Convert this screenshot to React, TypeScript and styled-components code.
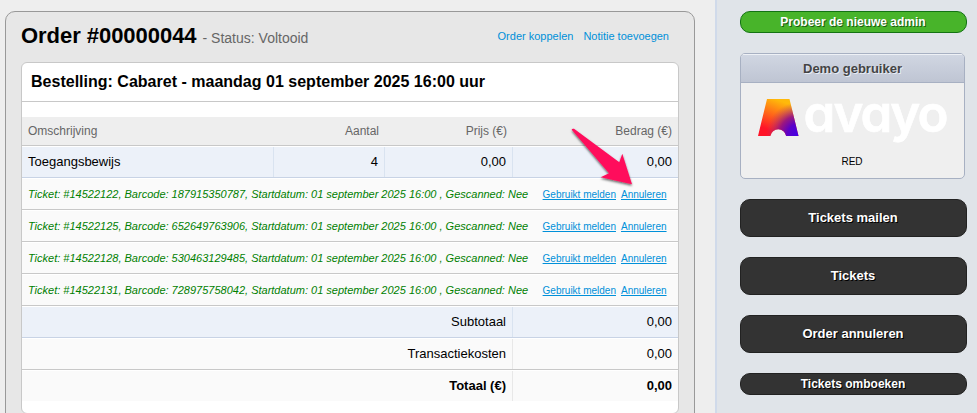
import React from "react";
import styled, { createGlobalStyle, css } from "styled-components";

const GlobalStyle = createGlobalStyle`
  * { box-sizing: border-box; }
  html, body { margin: 0; padding: 0; }
  body {
    font-family: "Liberation Sans", Arial, sans-serif;
    color: #000;
    background: #eee;
    overflow: hidden;
  }
`;

const Page = styled.div`
  position: relative;
  display: grid;
  grid-template-columns: 715px 1fr;
  width: 977px;
  height: 413px;
  overflow: hidden;
  background: #eee;
`;

const Main = styled.main`
  padding: 11px 0 0 5px;
`;

const Panel = styled.section`
  width: 690px;
  height: 430px;
  padding: 0 15px;
  border: 1px solid #999;
  border-radius: 10px;
  background: #e7e7e7;
`;

const PanelHeader = styled.header`
  display: flex;
  align-items: baseline;
  height: 50px;
  padding: 11px 10px 0 0;
  white-space: nowrap;
`;

const Title = styled.h1`
  margin: 0;
  font-size: 22px;
  line-height: 26px;
  font-weight: bold;
  letter-spacing: -0.04px;
`;

const Status = styled.span`
  margin-left: 6px;
  font-size: 14px;
  color: #666;
`;

const HeaderActions = styled.nav`
  display: flex;
  gap: 10px;
  margin-left: auto;
`;

const ActionLink = styled.a`
  margin-bottom: 3px;
  font-size: 11px;
  color: #0090d9;
  transform: translateY(-3px);
`;

const Card = styled.div`
  width: 658px;
  height: 352px;
  border: 1px solid #c8c8c8;
  border-radius: 6px;
  background: #fff;
  overflow: hidden;
`;

const CardTitle = styled.h2`
  height: 39px;
  margin: 0 0 15px;
  padding: 0 9px;
  border-bottom: 1px solid #c8c8c8;
  font-size: 16px;
  line-height: 38px;
  letter-spacing: 0.01px;
  white-space: nowrap;
`;

const rowColumns = css`
  display: grid;
  grid-template-columns: 252px 111px 128px 165px;
`;

const HeadRow = styled.div`
  ${rowColumns}
  height: 29px;
  border-bottom: 1px solid #c8c8c8;
  background: #eee;
  font-size: 12px;
  line-height: 28px;
  color: #666;
`;

const HeadCell = styled.div<{ $right?: boolean }>`
  padding: 0 6px;
  text-align: ${(p) => (p.$right ? "right" : "left")};
`;

const Row = styled.div<{ $blue?: boolean; $last?: boolean; $bold?: boolean }>`
  ${rowColumns}
  height: ${(p) => (p.$last ? 31 : 32)}px;
  border-top: 1px solid #fff;
  border-bottom: ${(p) =>
    p.$last ? "0" : `1px solid ${p.$blue ? "#c8d3e5" : "#c8c8c8"}`};
  background: ${(p) => (p.$blue ? "#ecf1f9" : "#fafafa")};
  font-size: 13px;
  font-weight: ${(p) => (p.$bold ? "bold" : "normal")};
  line-height: 29px;
`;

const Cell = styled.div<{ $right?: boolean; $span?: number; $tint?: string }>`
  grid-column: span ${(p) => p.$span ?? 1};
  padding: 0 6px;
  text-align: ${(p) => (p.$right ? "right" : "left")};
  border-right: ${(p) => (p.$tint ? `1px solid ${p.$tint}` : "0")};
`;

const TicketRow = styled.div`
  display: flex;
  align-items: center;
  height: 32px;
  padding: 0 6px 0 6px;
  border-top: 1px solid #fff;
  border-bottom: 1px solid #c8c8c8;
  background: #fafafa;
  white-space: nowrap;
`;

const TicketText = styled.span`
  width: 514.6px;
  font-size: 11px;
  font-style: italic;
  color: #008000;
`;

const TicketLink = styled.a`
  margin-right: 5px;
  font-size: 10px;
  color: #0090d9;
  text-decoration: underline;
`;

const Sidebar = styled.aside`
  display: flex;
  flex-direction: column;
  align-items: flex-start;
  gap: 20px;
  padding: 11px 0 0 23px;
  border-left: 2px solid #d0daea;
  background: #e0e4e9;
`;

const Button = styled.button<{ $green?: boolean; $small?: boolean }>`
  width: 227px;
  height: ${(p) => (p.$small ? 22 : 38)}px;
  padding: 0 1px 0 0;
  border: 1px solid ${(p) => (p.$green ? "#137313" : "#222")};
  border-radius: 10px;
  background: ${(p) => (p.$green ? "#48b42a" : "#333")};
  color: #fff;
  font-family: inherit;
  font-size: ${(p) => (p.$small ? 12 : 13)}px;
  font-weight: bold;
  line-height: ${(p) => (p.$small ? 20 : 36)}px;
  text-shadow: 1px 1px 0 ${(p) => (p.$green ? "#1c5c14" : "#000")};
`;

const UserBox = styled.section`
  width: 225px;
  height: 126px;
  border: 1px solid #a7b0c2;
  border-radius: 5px;
  background: #efefef;
  overflow: hidden;
`;

const UserTitle = styled.h3`
  height: 29px;
  margin: 0;
  border-top: 1px solid #eef1f6;
  border-bottom: 1px solid #a7b0c2;
  background: linear-gradient(#d0d6e2, #bfc5d3);
  color: #444;
  font-size: 13px;
  line-height: 28px;
  text-align: center;
  text-shadow: 1px 1px 0 #e8edf5;
`;

const Logo = styled.svg`
  display: block;
  width: 223px;
  height: 64px;
`;

const UserName = styled.div`
  padding-right: 1px;
  font-size: 10px;
  line-height: 30px;
  text-align: center;
`;

const Pointer = styled.svg`
  position: absolute;
  left: 565px;
  top: 122px;
  width: 76px;
  height: 72px;
  pointer-events: none;
`;

const tickets = [
  ["14522122", "187915350787"],
  ["14522125", "652649763906"],
  ["14522128", "530463129485"],
  ["14522131", "728975758042"],
];

function AvayoLogo() {
  return (
    <Logo viewBox="741 83 223 64">
      <defs>
        <linearGradient id="warm" x1="0.65" y1="0" x2="0.25" y2="1">
          <stop offset="0.08" stopColor="#ffb90a" />
          <stop offset="0.85" stopColor="#ff1428" />
        </linearGradient>
        <radialGradient
          id="cool"
          gradientUnits="userSpaceOnUse"
          cx="799"
          cy="135"
          r="33"
        >
          <stop offset="0" stopColor="#4300e8" />
          <stop offset="0.35" stopColor="#5b00c8" />
          <stop offset="0.6" stopColor="#8a0c90" stopOpacity="0.85" />
          <stop offset="1" stopColor="#c04060" stopOpacity="0" />
        </radialGradient>
        <path
          id="mark"
          d="M767 99H789.5L798.5 136H786.2A8 8 0 0 0 770.4 136H758Z"
        />
      </defs>
      <use href="#mark" fill="url(#warm)" />
      <use href="#mark" fill="url(#cool)" />
      <text
        x="803.5"
        y="131.6"
        fill="#fff"
        stroke="#fff"
        strokeWidth="0.6"
        fontFamily="Inter, sans-serif"
        fontSize="51"
        fontWeight="600"
        textLength="145"
        style={{ fontFeatureSettings: '"cv11" 1' }}
      >
        avayo
      </text>
    </Logo>
  );
}

export default function App() {
  return (
    <>
      <GlobalStyle />
      <Page>
        <Main>
          <Panel>
            <PanelHeader>
              <Title>Order #00000044</Title>
              <Status>- Status: Voltooid</Status>
              <HeaderActions>
                <ActionLink>Order koppelen</ActionLink>
                <ActionLink>Notitie toevoegen</ActionLink>
              </HeaderActions>
            </PanelHeader>
            <Card>
              <CardTitle>
                Bestelling: Cabaret - maandag 01 september 2025 16:00 uur
              </CardTitle>
              <HeadRow>
                <HeadCell>Omschrijving</HeadCell>
                <HeadCell $right>Aantal</HeadCell>
                <HeadCell $right>Prijs (€)</HeadCell>
                <HeadCell $right>Bedrag (€)</HeadCell>
              </HeadRow>
              <Row $blue>
                <Cell $tint="#d9e3f0">Toegangsbewijs</Cell>
                <Cell $right $tint="#d9e3f0">4</Cell>
                <Cell $right $tint="#d9e3f0">0,00</Cell>
                <Cell $right>0,00</Cell>
              </Row>
              {tickets.map(([id, barcode]) => (
                <TicketRow key={id}>
                  <TicketText>
                    {`Ticket: #${id}, Barcode: ${barcode}, Startdatum: 01 september 2025 16:00 , Gescanned: Nee`}
                  </TicketText>
                  <TicketLink>Gebruikt melden</TicketLink>
                  <TicketLink>Annuleren</TicketLink>
                </TicketRow>
              ))}
              <Row $blue>
                <Cell $span={3} $right $tint="#d9e3f0">Subtotaal</Cell>
                <Cell $right>0,00</Cell>
              </Row>
              <Row>
                <Cell $span={3} $right $tint="#e8e8e8">Transactiekosten</Cell>
                <Cell $right>0,00</Cell>
              </Row>
              <Row $last $bold>
                <Cell $span={3} $right $tint="#e8e8e8">Totaal (€)</Cell>
                <Cell $right>0,00</Cell>
              </Row>
            </Card>
          </Panel>
        </Main>
        <Sidebar>
          <Button $green $small>Probeer de nieuwe admin</Button>
          <UserBox>
            <UserTitle>Demo gebruiker</UserTitle>
            <AvayoLogo />
            <UserName>RED</UserName>
          </UserBox>
          <Button>Tickets mailen</Button>
          <Button>Tickets</Button>
          <Button>Order annuleren</Button>
          <Button $small>Tickets omboeken</Button>
        </Sidebar>
        <Pointer viewBox="565 122 76 72">
          <defs>
            <filter id="shadow" x="-20%" y="-20%" width="140%" height="150%">
              <feDropShadow dx="0" dy="1.5" stdDeviation="1.3" floodOpacity="0.6" />
            </filter>
          </defs>
          <path
            d="M571.7 129.8Q572 128.2 574 128.8L619.3 162.3L622.3 153.7L632 184.3L600.7 177.3L609 173.3Z"
            fill="#ff0f5b"
            filter="url(#shadow)"
          />
        </Pointer>
      </Page>
    </>
  );
}
